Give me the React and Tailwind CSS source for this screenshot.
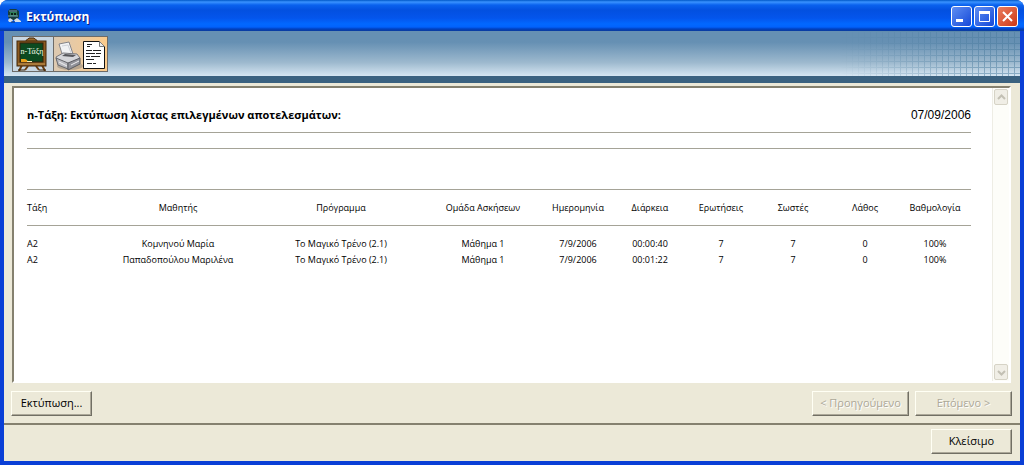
const columns = [
  { label: "Τάξη", width: "w-[70px]" },
  { label: "Μαθητής", width: "w-[162px]" },
  { label: "Πρόγραμμα", width: "w-[164px]" },
  { label: "Ομάδα Ασκήσεων", width: "w-[120px]" },
  { label: "Ημερομηνία", width: "w-[70px]" },
  { label: "Διάρκεια", width: "w-[74px]" },
  { label: "Ερωτήσεις", width: "w-[68px]" },
  { label: "Σωστές", width: "w-[76px]" },
  { label: "Λάθος", width: "w-[68px]" },
  { label: "Βαθμολογία", width: "w-[72px]" },
];

const results = [
  ["Α2", "Κομνηνού Μαρία", "Το Μαγικό Τρένο (2.1)", "Μάθημα 1", "7/9/2006", "00:00:40", "7", "7", "0", "100%"],
  ["Α2", "Παπαδοπούλου Μαριλένα", "Το Μαγικό Τρένο (2.1)", "Μάθημα 1", "7/9/2006", "00:01:22", "7", "7", "0", "100%"],
];

const AppIcon = () => (
  <svg className="size-4" viewBox="0 0 16 16" aria-hidden="true">
    <path d="M2 3l2-2h6l3 2v6l-2 3H4L2 9z" fill="#173d3c" />
    <path d="M4 4h7v4H4z" fill="#2f7f58" />
    <path d="M3 3h8M2 8h10" stroke="#7b9fae" />
    <path d="M5 5h2v2H5zM8 5h2v2H8z" fill="#0a2018" />
    <path d="M2 12l2-2 3 2-1 2H3zM8 12l3-2 4 3v1H9z" fill="#d3dde8" />
    <path d="M5 14h4" stroke="#16336b" />
  </svg>
);

const BoardIcon = () => (
  <svg className="h-[34px] w-10" viewBox="0 0 40 34" aria-hidden="true">
    <path d="M9 28L6 34M29 28l3 6M15 29l-3 4M23 29l3 4" stroke="#6b3f12" strokeWidth="2" />
    <path d="M5 33h7M26 33h7" stroke="#3a2209" />
    <path d="M13 4c0-2 2-1 3-3h5c1 2 3 1 3 3" fill="#9b6a2c" stroke="#4b2c0c" />
    <rect x="4" y="4" width="29" height="25" fill="#8c5a20" stroke="#43280c" />
    <rect x="7" y="6" width="23" height="19" fill="#0c4a20" stroke="#32200b" />
    <path d="M5 27h27" stroke="#c79a55" />
    <path d="M8 25v-3h4l2 1 1 2z" fill="#e8a01c" />
    <path d="M14 24h5v1h-5z" fill="#f7e9b0" />
    <text x="19" y="17" fill="#f5fbe8" fontSize="8" fontFamily="Liberation Serif, serif" textAnchor="middle">n-Τάξη</text>
  </svg>
);

const PrinterIcon = () => (
  <svg className="h-[34px] w-[53px]" viewBox="0 0 53 34" aria-hidden="true">
    <ellipse cx="16" cy="29" rx="13" ry="4" fill="#8e8981" opacity=".55" />
    <path d="M5 7l10-2 4 12-10 3z" fill="#f1f2f4" stroke="#85858a" />
    <path d="M8 9l6-1 3 8" fill="none" stroke="#cfd2d8" />
    <path d="M2 20l7-4 14 1 3 4-10 6-13-3z" fill="#d5d6da" stroke="#77777c" />
    <path d="M8 19l11 1 3-2-11-1z" fill="#55565b" />
    <path d="M2 21l12 5v6L4 28z" fill="#b9bac0" stroke="#67686d" />
    <path d="M14 26l12-5v6l-12 6z" fill="#92939a" stroke="#5b5c62" />
    <path d="M5 25l8 4M17 28l8-4" stroke="#eeeef0" />
    <path d="M29.500 4.500h16l5 5v22h-21z" fill="#fff" stroke="#111" />
    <path d="M45.500 4.500v5h5" fill="#eee" stroke="#777" />
    <path d="M33 7.500h5M33 9.500h3M32 13.500h6m1 0h8M32 16.500h9m1 0h5M32 19.500h4m1 0h9M32 22.500h8M33 26.500h5m1 0h3" stroke="#222" />
  </svg>
);

const CaptionButton = ({ label, color, children }) => (
  <button
    aria-label={label}
    className={`flex size-[21px] items-center justify-center rounded-[3px] border border-white bg-linear-to-br ${color}`}
  >
    <svg className="size-[19px]" viewBox="0 0 19 19" fill="none" stroke="white">
      {children}
    </svg>
  </button>
);

const Button = ({ className, children, ...props }) => (
  <button
    className={`h-[25px] border border-t-[#fffff4] border-l-[#fffff4] border-r-[#716f64] border-b-[#716f64] bg-[#ece9d8] text-center shadow-[inset_-1px_-1px_0_#aca899] disabled:text-[#aca899] disabled:[text-shadow:1px_1px_0_#fff] ${className}`}
    {...props}
  >
    {children}
  </button>
);

const ScrollButton = ({ label, d }) => (
  <button
    aria-label={label}
    className="flex h-4 w-full items-center justify-center rounded-[2px] border border-[#d6d3c6] bg-[#f0eee6]"
  >
    <svg className="size-[9px]" viewBox="0 0 9 9" fill="none" stroke="#c3c0b4" strokeWidth="2">
      <path d={d} />
    </svg>
  </button>
);

const TitleBar = () => (
  <header className="flex h-[31px] items-center gap-1 bg-[linear-gradient(#0058c8_0,#3a93ff_2px,#0a62ee_5px,#0350e0_10px,#0455ec_18px,#0268ff_24px,#0262fc_27px,#0040c0_29px,#0b3c9c_31px)] pr-1.5 pl-1.5">
    <AppIcon />
    <h1 className="flex-1 pt-0.5 text-[12px] font-bold text-white [text-shadow:1px_1px_0_#0a1883]">Εκτύπωση</h1>
    <div className="flex gap-0.5 pt-0.5">
      <CaptionButton label="Ελαχιστοποίηση" color="from-[#5f8df2] to-[#1546d8]">
        <path d="M4 13.500h7" strokeWidth="3" />
      </CaptionButton>
      <CaptionButton label="Μεγιστοποίηση" color="from-[#5f8df2] to-[#1546d8]">
        <path d="M4.500 4.500h10v10h-10z" />
        <path d="M4 5.500h11" strokeWidth="3" />
      </CaptionButton>
      <CaptionButton label="Κλείσιμο παραθύρου" color="from-[#ea7c5c] to-[#cc3511]">
        <path d="M5 5l9 9M14 5l-9 9" strokeWidth="2" />
      </CaptionButton>
    </div>
  </header>
);

const ToolBar = () => (
  <div className="flex h-[52px] border-b-[7px] border-[#3b6280] bg-linear-to-b from-[#6690b3] from-25% via-[#9db9ce] via-70% to-[#d6e6f2]">
    <div className="flex flex-1 items-center pl-2">
      <button aria-label="n-Τάξη" className="h-9 w-[42px] border border-[#6d6b68] bg-[#c8d6e1]">
        <BoardIcon />
      </button>
      <button aria-label="Εκτύπωση λίστας" className="h-9 w-[54px] border border-l-0 border-[#6d6b68] bg-linear-to-r from-[#dcc9b1] to-[#fbcb8c]">
        <PrinterIcon />
      </button>
    </div>
    <div className="w-[180px] bg-[linear-gradient(90deg,#4b7c9e_1px,transparent_1px),linear-gradient(#4b7c9e_1px,transparent_1px)] mask-l-from-20% bg-size-[6px_6px] opacity-50" />
  </div>
);

const Report = () => (
  <div className="min-w-0 flex-1 pt-[17px] pr-[21px] pl-[13px]">
    <div className="flex h-[28px] items-start justify-between border-b border-[#a5a397]">
      <h2 className="text-[11px] leading-5 font-bold">n-Τάξη: Εκτύπωση λίστας επιλεγμένων αποτελεσμάτων:</h2>
      <p className="font-['Liberation_Sans',sans-serif] text-[12px] leading-5">07/09/2006</p>
    </div>
    <div className="h-4 border-b border-[#a5a397]" />
    <table className="mt-10 w-full table-fixed text-center text-[9px] leading-4">
      <thead>
        <tr className="h-9 border-y border-[#a5a397]">
          {columns.map((col) => (
            <th key={col.label} className={`${col.width} p-0 font-normal whitespace-nowrap first:text-left`}>
              {col.label}
            </th>
          ))}
        </tr>
      </thead>
      <tbody className="before:block before:h-2.5">
        {results.map((row, i) => (
          <tr key={i}>
            {row.map((cell, j) => (
              <td key={j} className="p-0 whitespace-nowrap first:text-left">
                {cell}
              </td>
            ))}
          </tr>
        ))}
      </tbody>
    </table>
  </div>
);

const App = () => {
  return (
    <div className="flex min-h-screen flex-col overflow-hidden rounded-t-lg bg-[#0a3fd6] font-['Open_Sans','Noto_Sans',sans-serif] text-black">
      <TitleBar />
      <div className="mx-1 mb-1 flex flex-1 flex-col bg-[#ece9d8]">
        <ToolBar />
        <main className="flex flex-1 flex-col px-2 pt-[3px]">
          <div className="mr-px flex flex-1 border-2 border-t-[#85816f] border-r-white border-b-white border-l-[#85816f] bg-white">
            <Report />
            <div className="flex w-[17px] flex-col justify-between border-l border-[#eeede5] bg-[#fdfdf9] p-px">
              <ScrollButton label="Πάνω" d="M1 6l3.500-3.500L8 6" />
              <ScrollButton label="Κάτω" d="M1 3l3.500 3.500L8 3" />
            </div>
          </div>
          <div className="-ml-px flex gap-1.5 pt-2 pb-[7px] text-[11px]">
            <Button className="w-[81px]">Εκτύπωση...</Button>
            <div className="flex-1" />
            <Button className="w-[97px]" disabled>&lt; Προηγούμενο</Button>
            <Button className="w-[97px]" disabled>Επόμενο &gt;</Button>
          </div>
        </main>
        <footer className="flex justify-end border-t-2 border-[#85816f] px-2 pt-1 pb-[7px] text-[11px]">
          <Button className="w-[81px]">Κλείσιμο</Button>
        </footer>
      </div>
    </div>
  );
};

export default App;
